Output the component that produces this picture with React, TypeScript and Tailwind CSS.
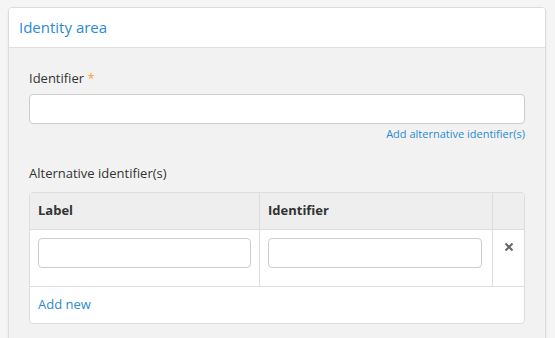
import React from "react";

export default function App() {
  return (
    <div
      className="h-[338px] w-[555px] overflow-hidden bg-[#f5f5f5] pl-[8px] pr-[9px] pt-[7px]"
      style={{ fontFamily: '"Open Sans", sans-serif' }}
    >
      <div className="h-[400px] rounded-[4px] border border-[#dcdcdc] shadow-[0_1px_2px_rgba(0,0,0,0.08)] overflow-hidden">
        <div className="flex h-[40px] items-center border-b border-[#e0e0e0] bg-white px-[10px]">
          <span className="text-[15px] text-[#2a8bd2]">Identity area</span>
        </div>
        <div className="h-full bg-[#f2f2f2] px-[20px] pt-[21px]">
          <div className="text-[13px] leading-[18px] text-[#333]">
            Identifier <span className="text-[#f5a623]">*</span>
          </div>
          <div className="mt-[7px] h-[30px] rounded-[4px] border border-[#ccc] bg-white"></div>
          <div className="mt-[3px] flex justify-end">
            <span className="text-[11px] leading-[14px] text-[#2a8bd2]">
              Add alternative identifier(s)
            </span>
          </div>
          <div className="mt-[23px] text-[13px] leading-[18px] text-[#333]">
            Alternative identifier(s)
          </div>
          <div className="mt-[10px] rounded-[4px] border border-[#ddd] bg-white overflow-hidden">
            <div className="flex h-[37px] border-b border-[#ddd] bg-[#eeeeee] text-[13px] font-bold text-[#333]">
              <div className="flex w-[230px] items-center border-r border-[#ddd] pl-[8px]">Label</div>
              <div className="flex w-[233px] items-center border-r border-[#ddd] pl-[8px]">Identifier</div>
              <div className="flex-1"></div>
            </div>
            <div className="flex h-[57px] border-b border-[#ddd]">
              <div className="w-[230px] border-r border-[#ddd] px-[8px] pt-[8px]">
                <div className="h-[30px] rounded-[4px] border border-[#ccc] bg-white"></div>
              </div>
              <div className="w-[233px] border-r border-[#ddd] pl-[8px] pr-[10px] pt-[8px]">
                <div className="h-[30px] rounded-[4px] border border-[#ccc] bg-white"></div>
              </div>
              <div className="flex flex-1 justify-center pt-[9px]">
                <svg width="10" height="10" viewBox="0 0 10 10" className="mt-[3px]">
                  <path d="M1.5 1.5 L8.5 8.5 M8.5 1.5 L1.5 8.5" stroke="#666" strokeWidth="2" strokeLinecap="butt" />
                </svg>
              </div>
            </div>
            <div className="flex h-[36px] items-center pl-[8px]">
              <span className="text-[13px] text-[#2a8bd2]">Add new</span>
            </div>
          </div>
        </div>
      </div>
    </div>
  );
}
